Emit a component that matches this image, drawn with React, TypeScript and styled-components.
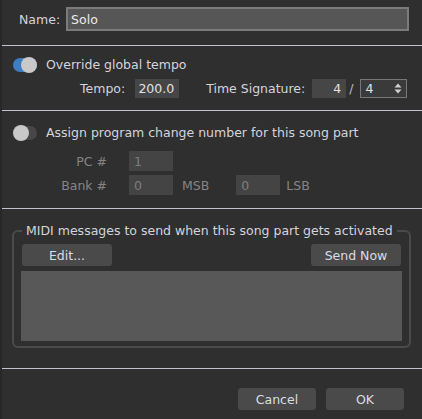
import React from "react";
import styled, { createGlobalStyle } from "styled-components";

const Global = createGlobalStyle`
  html, body { margin: 0; padding: 0; background: #2f2f2f; }
  * { box-sizing: border-box; }
`;

const Dialog = styled.div`
  width: 422px;
  height: 419px;
  background: #2f2f2f;
  border-left: 2px solid #282828;
  display: flex;
  flex-direction: column;
  font-family: "DejaVu Sans", sans-serif;
  font-size: 12.5px;
  color: #d4d4dc;
  overflow: hidden;
`;

const Row = styled.div<{ $top: number; $h: number; $left?: number }>`
  display: flex;
  align-items: center;
  margin-top: ${(p) => p.$top}px;
  height: ${(p) => p.$h}px;
  padding-left: ${(p) => p.$left ?? 0}px;
  flex-shrink: 0;
`;

const Label = styled.span<{ $dim?: boolean; $w?: number; $gap?: number }>`
  color: ${(p) => (p.$dim ? "#858585" : "#d4d4dc")};
  width: ${(p) => (p.$w ? `${p.$w}px` : "auto")};
  text-align: ${(p) => (p.$w ? "right" : "left")};
  margin-right: ${(p) => p.$gap ?? 0}px;
  white-space: nowrap;
  flex-shrink: 0;
`;

const NameInput = styled.div`
  flex: 1;
  height: 24px;
  margin-right: 13px;
  background: #565656;
  border: 2px solid #7b7b7b;
  padding-left: 3px;
  display: flex;
  align-items: center;
  color: #ececec;
`;

const Separator = styled.div<{ $top: number }>`
  margin: ${(p) => p.$top}px 0 0 0;
  height: 1px;
  background: #c2c2d0;
  flex-shrink: 0;
`;

const Track = styled.div<{ $on: boolean }>`
  position: relative;
  width: 24px;
  height: 14px;
  border-radius: 7px;
  background: ${(p) => (p.$on ? "#3d7dc0" : "#474747")};
  margin-left: 11px;
  margin-right: 9px;
  flex-shrink: 0;
`;

const Knob = styled.div<{ $on: boolean }>`
  position: absolute;
  top: -1px;
  left: ${(p) => (p.$on ? "8px" : "0px")};
  width: 16px;
  height: 16px;
  border-radius: 50%;
  background: #c9c9c9;
`;

const NumBox = styled.div<{ $w: number; $dim?: boolean; $right?: boolean; $gap?: number }>`
  width: ${(p) => p.$w}px;
  height: 100%;
  background: ${(p) => (p.$dim ? "#444444" : "#464646")};
  color: ${(p) => (p.$dim ? "#7e7e7e" : "#e2e2e2")};
  display: flex;
  align-items: center;
  justify-content: ${(p) => (p.$right ? "flex-end" : "flex-start")};
  padding: 0 5px;
  margin-right: ${(p) => p.$gap ?? 0}px;
  flex-shrink: 0;
`;

const Select = styled.div`
  width: 47px;
  height: 100%;
  border: 1px solid #777;
  background: #3a3a3a;
  display: flex;
  align-items: center;
  justify-content: space-between;
  padding: 0 4px 0 5px;
  color: #e2e2e2;
`;

const Slash = styled.span`
  margin: 0 6px 0 3px;
  color: #bdbdbd;
`;

const Group = styled.fieldset`
  margin: 14px 11px 0 10px;
  padding: 0 8px 5px 8px;
  border: 2px solid #4b4b4b;
  border-radius: 6px;
  display: flex;
  flex-direction: column;
  flex-shrink: 0;
`;

const Legend = styled.legend`
  padding: 0 4px;
  line-height: 16px;
  color: #d4d4dc;
`;

const ButtonBar = styled.div<{ $top: number; $gap?: number }>`
  display: flex;
  justify-content: ${(p) => (p.$gap ? "flex-end" : "space-between")};
  gap: ${(p) => p.$gap ?? 0}px;
  margin-top: ${(p) => p.$top}px;
  flex-shrink: 0;
`;

const Button = styled.div<{ $w: number }>`
  width: ${(p) => p.$w}px;
  height: 22px;
  border-radius: 3px;
  background: #4a4a4a;
  color: #dcdce4;
  display: flex;
  align-items: center;
  justify-content: center;
`;

const ListArea = styled.div`
  margin: 5px -1px 0 -1px;
  height: 70px;
  background: #585858;
`;

const Footer = styled(ButtonBar)`
  padding-right: 18px;
`;

const Spinner = () => (
  <svg width="8" height="11" viewBox="0 0 8 11">
    <path d="M4 0.5 L7.5 4.5 L0.5 4.5 Z" fill="#d0d0d0" />
    <path d="M4 10.5 L7.5 6.5 L0.5 6.5 Z" fill="#d0d0d0" />
  </svg>
);

export default function App() {
  return (
    <>
      <Global />
      <Dialog>
        <Row $top={7} $h={24} $left={17}>
          <Label $gap={6}>Name:</Label>
          <NameInput>Solo</NameInput>
        </Row>
        <Separator $top={14} />
        <Row $top={11} $h={15}>
          <Track $on>
            <Knob $on />
          </Track>
          <Label>Override global tempo</Label>
        </Row>
        <Row $top={7} $h={19} $left={78}>
          <Label $gap={10}>Tempo:</Label>
          <NumBox $w={44} $right $gap={27}>200.0</NumBox>
          <Label $gap={7}>Time Signature:</Label>
          <NumBox $w={34} $right>4</NumBox>
          <Slash>/</Slash>
          <Select>
            <span>4</span>
            <Spinner />
          </Select>
        </Row>
        <Separator $top={12} />
        <Row $top={14} $h={15}>
          <Track $on={false}>
            <Knob $on={false} />
          </Track>
          <Label>Assign program change number for this song part</Label>
        </Row>
        <Row $top={11} $h={20}>
          <Label $dim $w={105} $gap={22}>PC #</Label>
          <NumBox $w={44} $dim>1</NumBox>
        </Row>
        <Row $top={4} $h={20}>
          <Label $dim $w={105} $gap={22}>Bank #</Label>
          <NumBox $w={44} $dim $gap={9}>0</NumBox>
          <Label $dim $gap={27}>MSB</Label>
          <NumBox $w={44} $dim $gap={6}>0</NumBox>
          <Label $dim>LSB</Label>
        </Row>
        <Separator $top={13} />
        <Group>
          <Legend>MIDI messages to send when this song part gets activated</Legend>
          <ButtonBar $top={5}>
            <Button $w={90}>Edit...</Button>
            <Button $w={90}>Send Now</Button>
          </ButtonBar>
          <ListArea />
        </Group>
        <Separator $top={20} />
        <Footer $top={19} $gap={10}>
          <Button $w={78}>Cancel</Button>
          <Button $w={78}>OK</Button>
        </Footer>
      </Dialog>
    </>
  );
}
